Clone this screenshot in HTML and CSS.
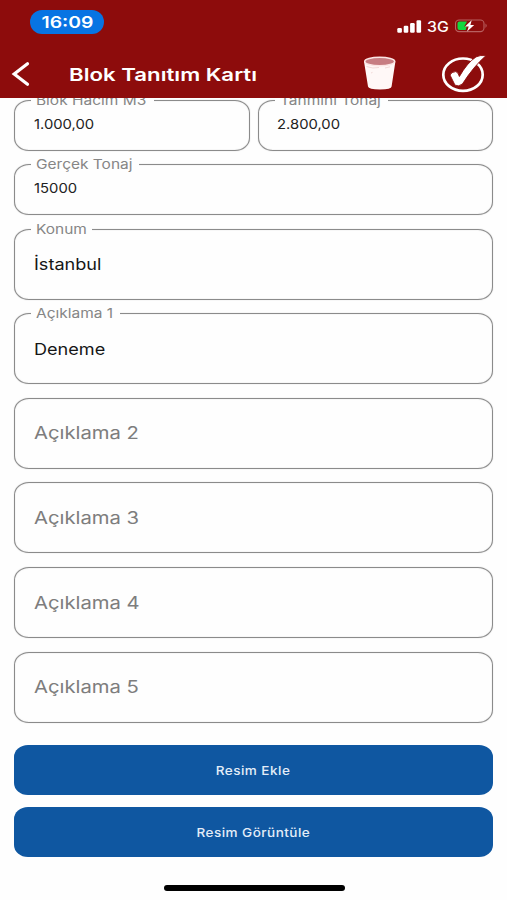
FILE: index.html
```html
<!DOCTYPE html>
<html lang="tr">
<head>
<meta charset="utf-8">
<title>Blok Tanıtım Kartı</title>
<link rel="stylesheet" href="styles.css">
</head>
<body>
<header class="header">
  <div class="status">
    <div class="clock"><span class="wide clock-text">16:09</span></div>
    <div class="indicators">
      <svg class="signal" width="25" height="13" viewBox="0 0 25 13" fill="#fff">
        <rect x="0.3" y="8.1" width="4.6" height="4.6" rx="1.2"/>
        <rect x="6.7" y="5.8" width="4.6" height="6.9" rx="1.2"/>
        <rect x="13.1" y="3.1" width="4.6" height="9.6" rx="1.2"/>
        <rect x="19.5" y="0.3" width="4.6" height="12.4" rx="1.2"/>
      </svg>
      <span class="network"><span class="wide network-text">3G</span></span>
      <svg class="battery" width="34" height="14" viewBox="0 0 34 14">
        <rect x="0.5" y="1" width="28.5" height="11.6" rx="3.6" fill="none" stroke="#b86060" stroke-width="1.1"/>
        <path d="M30.5 4.6Q32.9 6.8 30.5 9Z" fill="#b86060"/>
        <path d="M4.5 2.6H12L9.2 7.4H11.7L10.7 11H4.5Q2.5 11 2.5 9V4.6Q2.5 2.6 4.5 2.6Z" fill="#12d83f"/>
        <path d="M16.7 1.2L10 7.5H13.7L12.1 12.4L19.2 5.9H15.4Z" fill="#fff"/>
      </svg>
    </div>
  </div>
  <div class="toolbar">
    <svg class="back" width="20" height="26" viewBox="0 0 20 26"><path d="M17.5 2.8L4.2 13L17.5 23.2" fill="none" stroke="#fff" stroke-width="3.2" stroke-linecap="round" stroke-linejoin="miter"/></svg>
    <h1 class="title"><span class="wide title-text">Blok Tanıtım Kartı</span></h1>
    <svg class="trash" width="34" height="36" viewBox="0 0 34 36">
      <path d="M1 5.5L5 30.5Q5.5 33.5 17 33.5T28.6 30.5L32.4 5.5Z" fill="#fff8f7"/>
      <ellipse cx="16.7" cy="5.5" rx="15" ry="4.2" fill="#c77d82" stroke="#fbe5e4" stroke-width="1.5"/>
      <path d="M3.5 10.5Q10 13 16 11.5M22 12L27 10.8M8 17L9.5 16.4" fill="none" stroke="#eed2d1" stroke-width="0.8"/>
    </svg>
    <svg class="confirm" width="46" height="40" viewBox="0 0 46 40">
      <ellipse cx="22" cy="20.7" rx="19.7" ry="16.2" fill="none" stroke="#fff" stroke-width="2.7"/>
      <path d="M9 21Q10.5 17.8 14.7 17.6Q17 17.8 18.4 22.5Q26 9 35 2.9Q39 0.9 45 1.6Q32.5 12.5 21.4 30Q17.6 33 14 31.2Z" fill="#fff" stroke="#8d0c0c" stroke-width="0.9"/>
    </svg>
  </div>
</header>
<main class="form">
  <div class="row">
    <div class="field short"><span class="label l-volume"><span class="wide">Blok Hacim M3</span></span><span class="wide value">1.000,00</span></div>
    <div class="field short"><span class="label l-estimate"><span class="wide">Tahmini Tonaj</span></span><span class="wide value">2.800,00</span></div>
  </div>
  <div class="field short"><span class="label l-actual"><span class="wide">Gerçek Tonaj</span></span><span class="wide value">15000</span></div>
  <div class="field"><span class="label l-location"><span class="wide">Konum</span></span><span class="wide value large">İstanbul</span></div>
  <div class="field"><span class="label l-note"><span class="wide">Açıklama 1</span></span><span class="wide value large">Deneme</span></div>
  <div class="field"><span class="wide placeholder">Açıklama 2</span></div>
  <div class="field"><span class="wide placeholder">Açıklama 3</span></div>
  <div class="field"><span class="wide placeholder">Açıklama 4</span></div>
  <div class="field"><span class="wide placeholder">Açıklama 5</span></div>
  <div class="actions">
    <button class="button"><span class="wide button-text">Resim Ekle</span></button>
    <button class="button"><span class="wide button-text">Resim Görüntüle</span></button>
  </div>
</main>
<div class="home-bar"></div>
</body>
</html>
```

FILE: styles.css
```css
* { box-sizing: border-box; }
body {
  margin: 0;
  width: 507px;
  height: 900px;
  overflow: hidden;
  background: #fefefe;
  font-family: Inter, "Liberation Sans", sans-serif;
  display: flex;
  flex-direction: column;
}
.wide {
  display: inline-block;
  white-space: nowrap;
  transform: scaleX(1.19);
  transform-origin: left center;
}
.header {
  position: relative;
  z-index: 2;
  height: 98px;
  flex: none;
  background: #8d0c0c;
  color: #fff;
}
.status {
  height: 50px;
  padding: 10px 18px 0 30px;
  display: flex;
  justify-content: space-between;
  align-items: flex-start;
}
.clock {
  width: 74px;
  height: 24px;
  border-radius: 12px;
  background: #0874e3;
  display: flex;
  align-items: center;
  justify-content: center;
}
.clock-text { font-size: 16px; font-weight: 600; transform: scaleX(1.21); transform-origin: center; }
.indicators { display: flex; align-items: center; height: 14px; margin-top: 9px; }
.network { width: 22px; margin: 1px 6px 0 5px; font-size: 14px; line-height: 14px; font-weight: 500; }
.network-text { transform: scaleX(1.13); }
.toolbar { height: 48px; display: flex; align-items: center; padding-left: 10px; }
.title { margin: 2px 0 0 39px; width: 294px; font-size: 17.5px; line-height: 24px; font-weight: 600; }
.title-text { transform: scaleX(1.27); }
.trash { margin-top: -1px; }
.confirm { margin-left: 44px; }
.form { padding: 1.5px 14px 0; }
.row { display: grid; grid-template-columns: 1fr 1fr; gap: 8px; }
.field {
  position: relative;
  height: 71px;
  margin-bottom: 13.6px;
  padding: 0 18.5px;
  border: 1px solid #8b8b8b;
  border-radius: 15px / 13px;
  box-shadow: 0 0 1px rgba(120, 120, 120, 0.5), inset 0 0 1px rgba(120, 120, 120, 0.5);
  display: flex;
  align-items: center;
}
.field.short { height: 51px; padding-bottom: 3px; }
.label {
  position: absolute;
  top: -10px;
  left: 16px;
  height: 18px;
  padding-left: 5px;
  background: #fefefe;
  color: #868686;
  font-size: 13px;
  line-height: 18px;
}
.l-volume { width: 123px; }
.l-estimate { width: 113px; }
.l-actual { width: 108px; }
.l-location { width: 61px; }
.l-note { width: 89px; }
.value { font-size: 13px; color: #222; transform: scaleX(1.14); }
.value.large { font-size: 16px; color: #161616; transform: scaleX(1.13); }
.placeholder { font-size: 17px; color: #7d7d7d; }
.actions { display: flex; flex-direction: column; gap: 12px; padding-top: 9px; }
.button {
  height: 50px;
  padding: 0;
  border: 0;
  border-radius: 14px / 12px;
  background: #0f57a1;
  color: #e3edf8;
  font-family: inherit;
}
.button-text { font-size: 12px; font-weight: 500; letter-spacing: 0.4px; transform: scaleX(1.13); transform-origin: center; }
.home-bar {
  width: 181px;
  height: 6px;
  margin: auto auto 9px 164px;
  border-radius: 3px;
  background: #000;
}
```
